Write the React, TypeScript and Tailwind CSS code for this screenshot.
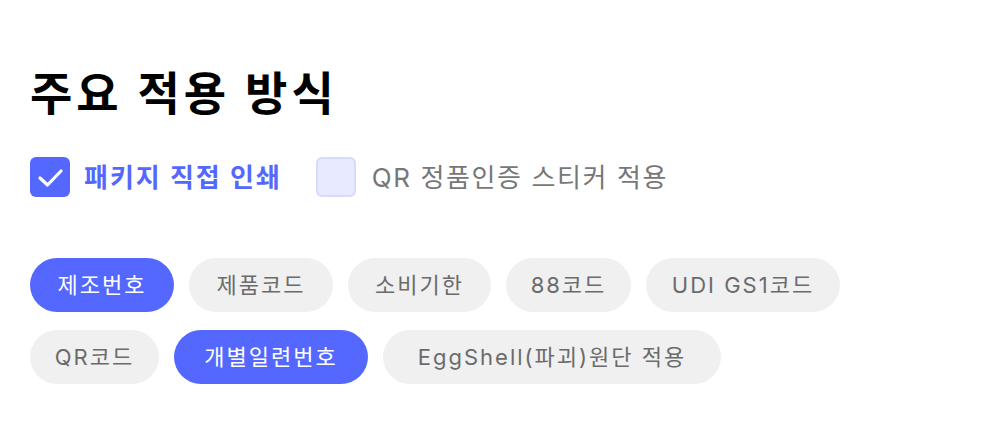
const font = { fontFamily: '"Inter", "Noto Sans CJK KR", sans-serif' };

const chips: { label: string; width: string; active?: boolean }[][] = [
  [
    { label: '제조번호', width: 'w-[144px]', active: true },
    { label: '제품코드', width: 'w-[144px]' },
    { label: '소비기한', width: 'w-[143px]' },
    { label: '88코드', width: 'w-[125px]' },
    { label: 'UDI GS1코드', width: 'w-[194px]' },
  ],
  [
    { label: 'QR코드', width: 'w-[129px]' },
    { label: '개별일련번호', width: 'w-[194px]', active: true },
    { label: 'EggShell(파괴)원단 적용', width: 'w-[338px]' },
  ],
];

function Chip({ label, width, active }: { label: string; width: string; active?: boolean }) {
  return (
    <span
      className={
        width +
        (active
          ? ' h-[54px] rounded-full flex items-center justify-center bg-[#5468ff] text-white text-[22px] tracking-[2px]'
          : ' h-[54px] rounded-full flex items-center justify-center bg-[#f0f0f0] text-[#6b6b6b] text-[22px] tracking-[2px]')
      }
    >
      {label}
    </span>
  );
}

export default function App() {
  return (
    <div className="w-[984px] h-[444px] bg-white pl-[30px] pt-[62px]" style={font}>
      <h1 className="text-[46px] font-bold text-black leading-[62px] tracking-[4px]">주요 적용 방식</h1>

      <div className="flex items-center mt-[32px] h-[42px]">
        <label className="flex items-center gap-[14px]">
          <span className="w-[40px] h-[40px] rounded-[6px] bg-[#5468ff] flex items-center justify-center">
            <svg width="28" height="28" viewBox="0 0 28 28" fill="none">
              <path d="M4 15l7.5 7L25 8" stroke="white" strokeWidth="3.2" strokeLinecap="round" strokeLinejoin="round" />
            </svg>
          </span>
          <span className="text-[26px] font-bold text-[#5468ff] tracking-[2px]">패키지 직접 인쇄</span>
        </label>
        <label className="flex items-center gap-[16px] ml-[34px]">
          <span className="w-[40px] h-[40px] rounded-[6px] bg-[#e8eaff] border-2 border-[#d5daff]" />
          <span className="text-[26px] text-[#777777] tracking-[1.6px]">QR 정품인증 스티커 적용</span>
        </label>
      </div>

      <div className="flex flex-col gap-[18px] mt-[60px]">
        {chips.map((row, i) => (
          <div key={i} className="flex gap-[15px]">
            {row.map((c) => (
              <Chip key={c.label} label={c.label} width={c.width} active={c.active} />
            ))}
          </div>
        ))}
      </div>
    </div>
  );
}
